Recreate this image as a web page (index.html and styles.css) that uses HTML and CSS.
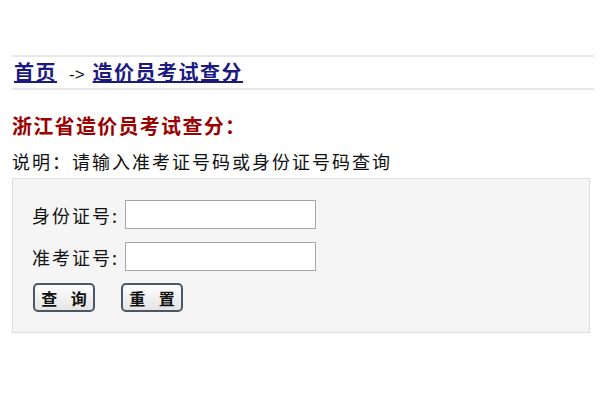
FILE: index.html
```html
<!DOCTYPE html>
<html lang="zh-CN">
<head>
    <meta charset="UTF-8">
    <title>浙江省造价员考试查分</title>
    <link rel="stylesheet" href="styles.css">
</head>
<body>
    <!-- 导航 -->
    <div class="crumb">
        <a href="#">首页</a><span class="arrow">-&gt;</span><a href="#">造价员考试查分</a>
    </div>

    <h2 class="title">浙江省造价员考试查分：</h2>
    <p class="note">说明：请输入准考证号码或身份证号码查询</p>

    <!-- 查询表单 -->
    <form class="query-box">
        <div class="row">
            <label for="sfz">身份证号:</label>
            <input type="text" id="sfz">
        </div>
        <div class="row">
            <label for="zkz">准考证号:</label>
            <input type="text" id="zkz">
        </div>
        <div class="btns">
            <button type="button">查 询</button>
            <button type="reset">重 置</button>
        </div>
    </form>
</body>
</html>
```

FILE: styles.css
```css
body {
    margin: 0;
    padding: 55px 6px 0 12px;
    background: #fff;
    color: #111;
    font-family: "Noto Sans CJK SC", sans-serif;
}

/* 顶部导航条 */
.crumb {
    border-top: 2px solid #e8e8e8;
    border-bottom: 2px solid #e8e8e8;
    height: 31px;
    padding-left: 2px;
    font-size: 20px;
    line-height: 30px;
}

.crumb a {
    color: #1a1a80;
    font-weight: bold;
    letter-spacing: 1.5px;
    text-decoration: underline;
}

.crumb .arrow {
    font-family: "Liberation Sans", sans-serif;
    font-size: 17px;
    margin: 0 8px 0 12px;
}

.title {
    margin: 23px 0 0 0;
    font-size: 20px;
    line-height: 26px;
    letter-spacing: 1.3px;
    color: #990000;
    font-weight: bold;
}

.note {
    margin: 9px 0 0 0;
    font-size: 18px;
    line-height: 26px;
    letter-spacing: 2px;
}

/* 表单区域 */
.query-box {
    margin: 4px 0 0 0;
    width: 578px;
    height: 155px;
    box-sizing: border-box;
    background: #f5f5f5;
    border: 1px solid #dedede;
    padding: 21px 0 0 19px;
}

.row {
    display: flex;
    align-items: center;
    margin-bottom: 13px;
}

.row label {
    font-size: 18px;
    letter-spacing: 2px;
    width: 93px;
}

.row input {
    width: 191px;
    height: 29px;
    box-sizing: border-box;
    border: 1px solid #a6a6a6;
    background: #fff;
}

.btns {
    display: flex;
    gap: 26px;
    margin-top: -1px;
    padding-left: 1px;
}

.btns button {
    width: 62px;
    height: 29px;
    font-family: "Noto Sans CJK SC", sans-serif;
    font-size: 16px;
    font-weight: bold;
    letter-spacing: 5px;
    text-indent: 5px;
    color: #111;
    border: 2px solid #4a5866;
    border-radius: 5px;
    background: linear-gradient(#ffffff, #e4e4e4);
    padding: 0;
}
```
